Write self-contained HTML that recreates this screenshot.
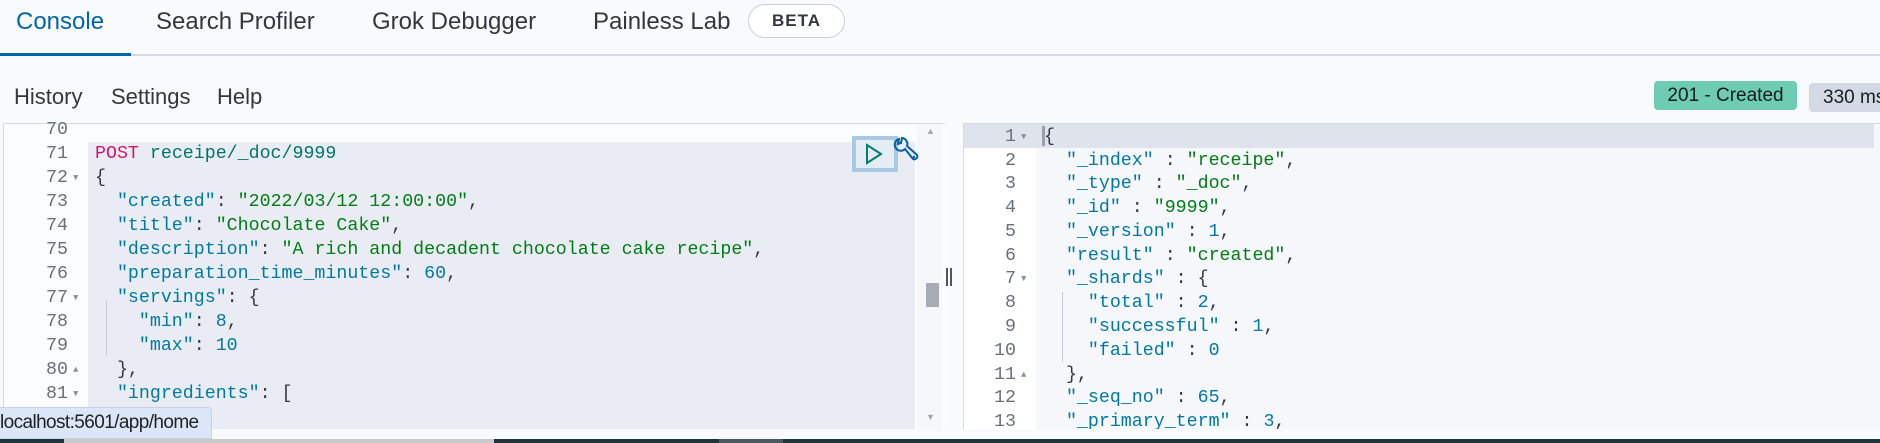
<!DOCTYPE html>
<html><head><meta charset="utf-8"><style>
*{margin:0;padding:0;box-sizing:border-box}
html,body{width:1880px;height:443px;overflow:hidden}
body{background:#f9fafc;font-family:"Liberation Sans",sans-serif;color:#343741;position:relative}
.abs{position:absolute}
.tab{position:absolute;top:8px;font-size:24px;line-height:28px;color:#343741;white-space:nowrap}
.mono{font-family:"Liberation Mono",monospace;font-size:18.3px}
.ln{position:absolute;height:24px;line-height:24px;white-space:pre}
.num{position:absolute;text-align:right;color:#69707d}
.k{color:#0079a5}.s{color:#017d15}.p{color:#343741}.m{color:#d6136e}.u{color:#00756b}.n{color:#0079a5}
.ar{position:absolute;font-size:9px;color:#8a8f99;line-height:24px;height:24px}
</style></head><body>
<div class="tab" style="left:16px;color:#0066a8">Console</div>
<div class="tab" style="left:156px">Search Profiler</div>
<div class="tab" style="left:372px">Grok Debugger</div>
<div class="tab" style="left:593px">Painless Lab</div>
<div class="abs" style="left:748px;top:4px;width:97px;height:34px;border:1px solid #c9ced8;border-radius:17px;background:#fff;font-weight:bold;font-size:17px;line-height:32px;text-align:center;letter-spacing:1px">BETA</div>
<div class="abs" style="left:0;top:54px;width:1880px;height:2px;background:#d3dae6"></div>
<div class="abs" style="left:0;top:53px;width:131px;height:3px;background:#0066a8"></div>
<div class="abs" style="left:14px;top:84px;font-size:22px;line-height:26px">History</div>
<div class="abs" style="left:111px;top:84px;font-size:22px;line-height:26px">Settings</div>
<div class="abs" style="left:217px;top:84px;font-size:22px;line-height:26px">Help</div>
<div class="abs" style="left:1654px;top:81px;width:143px;height:29px;background:#6dccb1;border-radius:4px;font-size:19px;line-height:29px;text-align:center;color:#1a1c21">201 - Created</div>
<div class="abs" style="left:1809px;top:83px;width:90px;height:29px;background:#d3dae6;border-radius:4px;font-size:19px;line-height:29px;padding-left:14px;color:#1a1c21;white-space:nowrap">330 ms</div>
<div class="abs" style="left:3px;top:123px;width:942px;height:306px;background:#fbfcfd;border-top:1px solid #d3dae6;border-left:1px solid #d3dae6"></div>
<div class="abs" style="left:88px;top:142px;width:827px;height:287px;background:#e9edf3"></div>
<div class="abs" style="left:917px;top:124px;width:25px;height:305px;background:#f5f7fa"></div>
<div class="abs" style="left:926px;top:283px;width:13px;height:24px;background:#a7acb4"></div>
<div class="abs" style="left:926px;top:126px;font-size:9px;color:#a0a5ae">▲</div>
<div class="abs" style="left:926px;top:412px;font-size:9px;color:#a0a5ae">▼</div>
<div class="abs" style="left:852px;top:136px;width:46px;height:36px;border:4px solid #a9c9e2;background:#e4ecf4"></div>
<svg class="abs" style="left:864px;top:143px" width="20" height="22" viewBox="0 0 20 22"><path d="M3 2 L17 11 L3 20 Z" fill="none" stroke="#017d73" stroke-width="2"/></svg>
<svg class="abs" style="left:893px;top:136px" width="26" height="30" viewBox="0 0 26 30"><path d="M6 3 A6 6 0 1 0 12 13 L20 23 A3 3 0 0 0 24 19 L14 10 A6 6 0 0 0 9 2 L8 7 L5 8 Z" fill="none" stroke="#0061a6" stroke-width="2"/><circle cx="21" cy="21" r="1.2" fill="#0061a6"/></svg>
<div class="mono">
<div class="num ln" style="left:10px;width:58px;top:118px">70</div>
<div class="num ln" style="left:10px;width:58px;top:142px">71</div>
<div class="num ln" style="left:10px;width:58px;top:166px">72</div><div class="ar" style="left:73px;top:166px">▼</div>
<div class="num ln" style="left:10px;width:58px;top:190px">73</div>
<div class="num ln" style="left:10px;width:58px;top:214px">74</div>
<div class="num ln" style="left:10px;width:58px;top:238px">75</div>
<div class="num ln" style="left:10px;width:58px;top:262px">76</div>
<div class="num ln" style="left:10px;width:58px;top:286px">77</div><div class="ar" style="left:73px;top:286px">▼</div>
<div class="num ln" style="left:10px;width:58px;top:310px">78</div>
<div class="num ln" style="left:10px;width:58px;top:334px">79</div>
<div class="num ln" style="left:10px;width:58px;top:358px">80</div><div class="ar" style="left:73px;top:358px">▲</div>
<div class="num ln" style="left:10px;width:58px;top:382px">81</div><div class="ar" style="left:73px;top:382px">▼</div>
<div class="ln" style="left:95px;top:142px"><span class="m">POST</span> <span class="u">receipe/_doc/9999</span></div>
<div class="ln p" style="left:95px;top:166px">{</div>
<div class="ln" style="left:95px;top:190px">  <span class="k">"created"</span>: <span class="s">"2022/03/12 12:00:00"</span>,</div>
<div class="ln" style="left:95px;top:214px">  <span class="k">"title"</span>: <span class="s">"Chocolate Cake"</span>,</div>
<div class="ln" style="left:95px;top:238px">  <span class="k">"description"</span>: <span class="s">"A rich and decadent chocolate cake recipe"</span>,</div>
<div class="ln" style="left:95px;top:262px">  <span class="k">"preparation_time_minutes"</span>: <span class="n">60</span>,</div>
<div class="ln" style="left:95px;top:286px">  <span class="k">"servings"</span>: {</div>
<div class="ln" style="left:95px;top:310px">    <span class="k">"min"</span>: <span class="n">8</span>,</div>
<div class="ln" style="left:95px;top:334px">    <span class="k">"max"</span>: <span class="n">10</span></div>
<div class="ln" style="left:95px;top:358px">  },</div>
<div class="ln" style="left:95px;top:382px">  <span class="k">"ingredients"</span>: [</div>
</div>
<div class="abs" style="left:106px;top:300px;width:1px;height:56px;background:#c8ccd4"></div>
<div class="abs" style="left:946px;top:268px;width:2px;height:18px;background:#555"></div>
<div class="abs" style="left:950px;top:268px;width:2px;height:18px;background:#555"></div>
<div class="abs" style="left:963px;top:123px;width:917px;height:306px;background:#f5f7fa;border-left:1px solid #d3dae6;border-top:1px solid #d3dae6"></div>
<div class="abs" style="left:964px;top:124px;width:72px;height:305px;background:#fff"></div>
<div class="abs" style="left:964px;top:124px;width:910px;height:24px;background:#dfe4ec"></div>
<div class="abs" style="left:1042px;top:126px;width:3px;height:20px;background:#9aa0aa"></div>
<div class="mono">
<div class="num ln" style="left:960px;width:56px;top:125px">1</div><div class="ar" style="left:1021px;top:125px">▼</div>
<div class="num ln" style="left:960px;width:56px;top:149px">2</div>
<div class="num ln" style="left:960px;width:56px;top:172px">3</div>
<div class="num ln" style="left:960px;width:56px;top:196px">4</div>
<div class="num ln" style="left:960px;width:56px;top:220px">5</div>
<div class="num ln" style="left:960px;width:56px;top:244px">6</div>
<div class="num ln" style="left:960px;width:56px;top:267px">7</div><div class="ar" style="left:1021px;top:267px">▼</div>
<div class="num ln" style="left:960px;width:56px;top:291px">8</div>
<div class="num ln" style="left:960px;width:56px;top:315px">9</div>
<div class="num ln" style="left:960px;width:56px;top:339px">10</div>
<div class="num ln" style="left:960px;width:56px;top:363px">11</div><div class="ar" style="left:1021px;top:363px">▲</div>
<div class="num ln" style="left:960px;width:56px;top:386px">12</div>
<div class="num ln" style="left:960px;width:56px;top:410px;height:19px;overflow:hidden">13</div>
<div class="ln p" style="left:1044px;top:125px">{</div>
<div class="ln" style="left:1044px;top:149px">  <span class="k">"_index"</span> : <span class="s">"receipe"</span>,</div>
<div class="ln" style="left:1044px;top:172px">  <span class="k">"_type"</span> : <span class="s">"_doc"</span>,</div>
<div class="ln" style="left:1044px;top:196px">  <span class="k">"_id"</span> : <span class="s">"9999"</span>,</div>
<div class="ln" style="left:1044px;top:220px">  <span class="k">"_version"</span> : <span class="n">1</span>,</div>
<div class="ln" style="left:1044px;top:244px">  <span class="k">"result"</span> : <span class="s">"created"</span>,</div>
<div class="ln" style="left:1044px;top:267px">  <span class="k">"_shards"</span> : {</div>
<div class="ln" style="left:1044px;top:291px">    <span class="k">"total"</span> : <span class="n">2</span>,</div>
<div class="ln" style="left:1044px;top:315px">    <span class="k">"successful"</span> : <span class="n">1</span>,</div>
<div class="ln" style="left:1044px;top:339px">    <span class="k">"failed"</span> : <span class="n">0</span></div>
<div class="ln" style="left:1044px;top:363px">  },</div>
<div class="ln" style="left:1044px;top:386px">  <span class="k">"_seq_no"</span> : <span class="n">65</span>,</div>
<div class="ln" style="left:1044px;top:410px;height:19px;overflow:hidden">  <span class="k">"_primary_term"</span> : <span class="n">3</span>,</div>
</div>
<div class="abs" style="left:1062px;top:292px;width:1px;height:70px;background:#c8ccd4"></div>
<div class="abs" style="left:0;top:407px;width:212px;height:32px;background:#dbe7f8;border:1px solid #c4d3e8;border-left:none;border-radius:0 4px 0 0;font-size:19px;line-height:30px;letter-spacing:-0.6px;color:#222;white-space:nowrap;overflow:hidden">localhost:5601/app/home</div>
<div class="abs" style="left:0;top:439px;width:1880px;height:4px;background:#1f343b"></div>
<div class="abs" style="left:64px;top:439px;width:430px;height:4px;background:#c9c9c9"></div>
<div class="abs" style="left:719px;top:439px;width:64px;height:4px;background:#4a5a60"></div>
</body></html>
